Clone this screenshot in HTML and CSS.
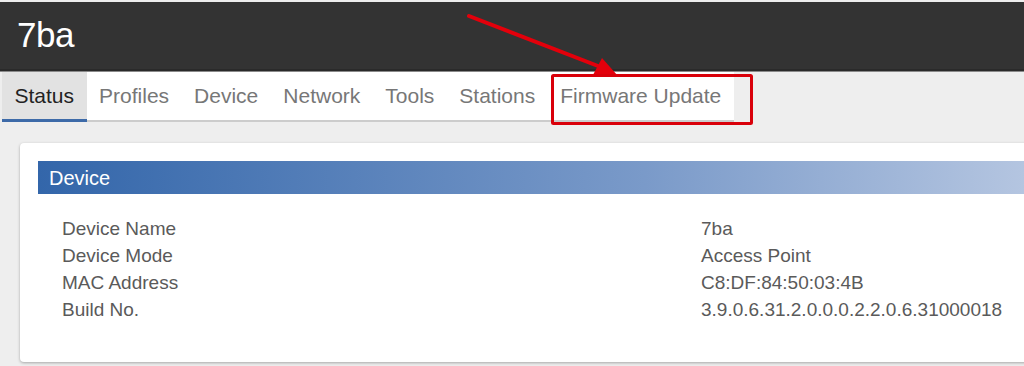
FILE: index.html
```html
<!DOCTYPE html>
<html lang="en">
<head>
    <meta charset="UTF-8">
    <title>7ba - Status</title>
    <link rel="stylesheet" href="styles.css">
</head>
<body>
    <div class="topbar">
        <h1>7ba</h1>
    </div>

    <div class="tabbar">
        <ul class="tabs">
            <li class="active">Status</li>
            <li>Profiles</li>
            <li>Device</li>
            <li>Network</li>
            <li>Tools</li>
            <li>Stations</li>
            <li>Firmware Update</li>
        </ul>
    </div>

    <div class="content">
        <div class="card">
            <div class="card-title">Device</div>
            <table class="info">
                <tr><td>Device Name</td><td>7ba</td></tr>
                <tr><td>Device Mode</td><td>Access Point</td></tr>
                <tr><td>MAC Address</td><td>C8:DF:84:50:03:4B</td></tr>
                <tr><td>Build No.</td><td>3.9.0.6.31.2.0.0.0.2.2.0.6.31000018</td></tr>
            </table>
        </div>
    </div>

    <svg class="markup" width="1024" height="366" viewBox="0 0 1024 366">
        <line x1="469" y1="16" x2="598" y2="66" stroke="#e3000b" stroke-width="4" stroke-linecap="round"/>
        <polygon points="618,76 593,75 602,58" fill="#e3000b"/>
        <rect x="552.5" y="75.5" width="199" height="48" fill="none" stroke="#d9000a" stroke-width="3" rx="1"/>
    </svg>
</body>
</html>
```

FILE: styles.css
```css
body {
    margin: 0;
    padding-top: 2px;
    background-color: #eeeeee;
    font-family: "Liberation Sans", Arial, sans-serif;
    overflow: hidden;
    height: 364px;
    position: relative;
}

.topbar {
    height: 67px;
    background-color: #333333;
    border-bottom: 2px solid #2a2a2a;
    display: flex;
    align-items: center;
}

.topbar h1 {
    margin: 0 0 2px 17px;
    font-size: 35px;
    font-weight: normal;
    color: #ffffff;
    letter-spacing: -0.5px;
}

.tabbar {
    display: flex;
    border-top: 1px solid #8a8a8a;
}

.tabs {
    list-style: none;
    margin: 0 0 0 2px;
    padding: 0;
    display: flex;
    background-color: #ffffff;
    border-bottom: 2px solid #cccccc;
}

.tabs li {
    height: 48px;
    line-height: 48px;
    padding: 0 12.5px;
    font-size: 21px;
    color: #777777;
}

.tabs li.active {
    background-color: #e2e2e2;
    color: #222222;
    box-shadow: inset 0 -3px 0 #3d6aa8;
    margin-bottom: -2px;
    height: 50px;
    box-sizing: border-box;
    padding-bottom: 2px;
}

.content {
    padding: 21px 0 0 20px;
}

.card {
    width: 1100px;
    height: 201px;
    padding: 18px 0 0 18px;
    background-color: #ffffff;
    border-radius: 4px;
    box-shadow: 0 1px 3px rgba(0, 0, 0, 0.3);
}

.card-title {
    height: 33px;
    line-height: 34px;
    padding-left: 11px;
    font-size: 20px;
    color: #ffffff;
    background: linear-gradient(to right, #3366aa 0%, #7a9ac9 60%, #b8c8e2 100%);
    width: 1000px;
}

.info {
    margin: 21px 0 0 24px;
    border-collapse: collapse;
    font-size: 19px;
    color: #5a5a5a;
}

.info td {
    padding: 0;
    height: 27px;
    line-height: 27px;
}

.info td:first-child {
    width: 639px;
}

.markup {
    position: absolute;
    top: 0;
    left: 0;
    pointer-events: none;
}
```
